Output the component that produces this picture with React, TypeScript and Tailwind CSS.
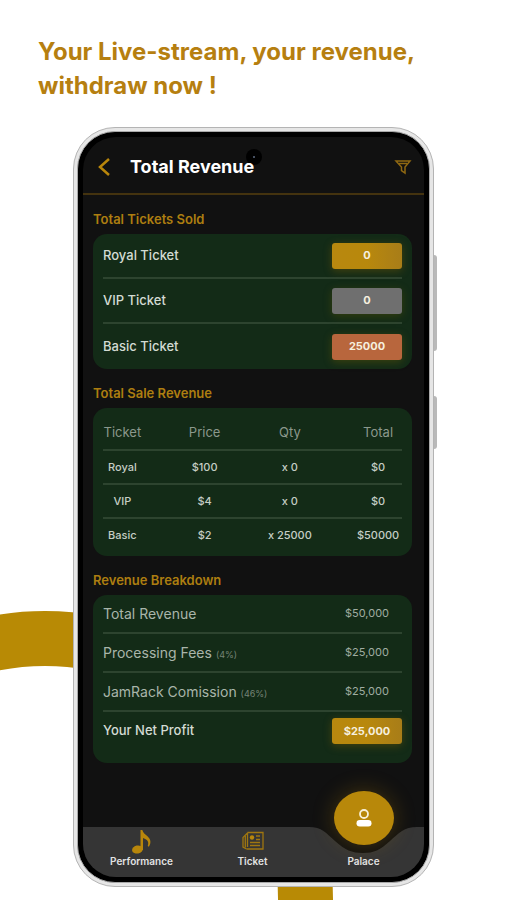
import type { ReactNode } from "react";

type BadgeTone = "gold" | "silver" | "bronze";

const tones: Record<BadgeTone, string> = {
  gold: "bg-linear-to-r from-[#b8880f] via-[#b8880c] to-[#a87d18] shadow-[0_2px_8px_rgba(140,100,0,0.4)]",
  silver: "bg-[#6f6f6f] shadow-[0_2px_8px_rgba(100,90,0,0.4)]",
  bronze: "bg-[#b8663d] shadow-[0_2px_8px_rgba(120,100,0,0.4)]",
};

const tickets: { name: string; sold: string; tone: BadgeTone }[] = [
  { name: "Royal Ticket", sold: "0", tone: "gold" },
  { name: "VIP Ticket", sold: "0", tone: "silver" },
  { name: "Basic Ticket", sold: "25000", tone: "bronze" },
];

const sales = [
  ["Royal", "$100", "x 0", "$0"],
  ["VIP", "$4", "x 0", "$0"],
  ["Basic", "$2", "x 25000", "$50000"],
];

const breakdown = [
  { label: "Total Revenue", note: "", amount: "$50,000" },
  { label: "Processing Fees", note: "(4%)", amount: "$25,000" },
  { label: "JamRack Comission", note: "(46%)", amount: "$25,000" },
];

function Badge({ tone, children }: { tone: BadgeTone; children: ReactNode }) {
  return (
    <span
      className={`flex h-[26px] w-[70px] items-center justify-center rounded-[3px] text-[11px] font-bold text-[#f6efdf] ${tones[tone]}`}
    >
      {children}
    </span>
  );
}

function Section({ title, children }: { title: string; children: ReactNode }) {
  return (
    <section className="pr-3 pl-[10px]">
      <h2 className="pt-[15px] pb-[6px] text-[13px] leading-[18px] font-semibold text-[#ad7e10]">{title}</h2>
      <div className="rounded-[14px] bg-[#132b17] px-[10px]">{children}</div>
    </section>
  );
}

function NoteIcon() {
  return (
    <svg width="22" height="26" viewBox="0 0 22 26" aria-hidden="true">
      <ellipse cx="6.5" cy="20.5" rx="5.5" ry="4" fill="#b8860b" transform="rotate(-12 6.5 20.5)" />
      <path
        d="M9.500 1h1.800c.8 3.200 3.200 4.400 5.400 6.400 3.200 3 3.600 6.300 1.200 10.300l-1.200-.6c1.400-3.600.3-6.600-4.700-8.100v12H9.500z"
        fill="#b8860b"
      />
    </svg>
  );
}

function NewsIcon() {
  return (
    <svg width="22" height="20" viewBox="0 0 22 20" fill="none" stroke="#9f7610" strokeWidth="1.300" aria-hidden="true">
      <path d="M5.500 1.500h15.500v16.500H4.500" />
      <path d="M5.500 1.500v14.500M5.500 2 1 6.500v9.500l3.500 2" />
      <path d="M3.300 5v11.500" />
      <circle cx="10" cy="6.500" r="2.200" fill="#b8860b" stroke="none" />
      <path d="M14 5h4M14 8.500h4M8 11.500h10M8 14.500h10" />
    </svg>
  );
}

export default function App() {
  return (
    <main className="relative min-h-screen overflow-hidden bg-white pb-[13px] font-['Inter','Liberation_Sans',sans-serif]">
      <div
        aria-hidden="true"
        className="absolute top-[611px] left-[-243px] size-[576px] rounded-full border-[55px] border-[#b88a05]"
      />

      <h1 className="px-[38px] pt-[35px] text-[24px] leading-[34px] font-bold text-[#b67f10]">
        Your Live-stream, your revenue,
        <br />
        withdraw now !
      </h1>

      <div className="relative mt-6 mr-[72px] ml-[73px] rounded-[42px] border border-[#b4b4b4] bg-[#e6e6e6] p-[3px]">
        <div aria-hidden="true" className="absolute top-[127px] right-[-4px] h-[96px] w-[3px] rounded-r-sm bg-[#b9b9b9]" />
        <div aria-hidden="true" className="absolute top-[268px] right-[-4px] h-[53px] w-[3px] rounded-r-sm bg-[#b9b9b9]" />

        <div className="rounded-[38px] border border-[#a9a9a9] bg-black p-[5px]">
          <div className="relative overflow-hidden rounded-[33px] bg-[#111111]">
            <div
              aria-hidden="true"
              className="absolute top-[12px] left-1/2 flex size-4 -translate-x-1/2 items-center justify-center rounded-full bg-black"
            >
              <span className="size-[2px] rounded-full bg-[#5c6a80]" />
            </div>

            <header className="relative flex h-[58px] items-center border-b-2 border-[#44330f] pt-1 pr-3 pl-[13px]">
              <button type="button" aria-label="Back" className="flex h-6 w-[34px] items-center">
                <svg width="15" height="20" viewBox="0 0 15 20" fill="none" stroke="#b8860b" strokeWidth="2.500" aria-hidden="true">
                  <path d="M13 2 4 10l9 8" />
                </svg>
              </button>
              <span className="text-[18px] leading-6 font-bold text-white">Total Revenue</span>
              <button type="button" aria-label="Filter" className="ml-auto">
                <svg width="18" height="16" viewBox="0 0 18 16" fill="none" stroke="#8f6812" strokeWidth="1.500" aria-hidden="true">
                  <path d="M2 2h14l-5 6v6l-3.500-2.500V8z" />
                  <path d="M5 4.500h8" />
                </svg>
              </button>
            </header>

            <Section title="Total Tickets Sold">
              <ul>
                {tickets.map((t) => (
                  <li
                    key={t.name}
                    className="flex h-[45px] items-center justify-between border-b-2 border-[#2d442f] text-[13px] font-medium text-[#d3dbd3] last:border-b-0"
                  >
                    {t.name}
                    <Badge tone={t.tone}>{t.sold}</Badge>
                  </li>
                ))}
              </ul>
            </Section>

            <Section title="Total Sale Revenue">
              <div className="pt-2 pb-1">
                <table className="w-full table-fixed text-center whitespace-nowrap">
                  <colgroup>
                    <col className="w-[27%]" />
                    <col className="w-[14%]" />
                    <col className="w-[43%]" />
                    <col className="w-[16%]" />
                  </colgroup>
                  <thead>
                    <tr className="h-[34px] border-b-2 border-[#2d442f] text-[13px] text-[#8b988c]">
                      <th className="pr-[42px] font-normal">Ticket</th>
                      <th className="font-normal">Price</th>
                      <th className="font-normal">Qty</th>
                      <th className="font-normal">Total</th>
                    </tr>
                  </thead>
                  <tbody>
                    {sales.map((row) => (
                      <tr
                        key={row[0]}
                        className="h-[34px] border-b-2 border-[#2d442f] text-[11px] font-medium text-[#c5cec5] last:border-b-0"
                      >
                        <td className="pr-[42px]">{row[0]}</td>
                        <td>{row[1]}</td>
                        <td>{row[2]}</td>
                        <td>{row[3]}</td>
                      </tr>
                    ))}
                  </tbody>
                </table>
              </div>
            </Section>

            <Section title="Revenue Breakdown">
              <dl className="pb-[13px]">
                {breakdown.map((b) => (
                  <div key={b.label} className="flex h-[39px] items-center justify-between border-b-2 border-[#2d442f]">
                    <dt className="text-[14px] text-[#a9b5aa]">
                      {b.label} {b.note && <span className="text-[9px] text-[#758476]">{b.note}</span>}
                    </dt>
                    <dd className="w-[70px] text-center text-[11px] text-[#a0ada1]">{b.amount}</dd>
                  </div>
                ))}
                <div className="flex h-[38px] items-center justify-between">
                  <dt className="text-[13px] font-medium text-[#d3dbd3]">Your Net Profit</dt>
                  <dd>
                    <Badge tone="gold">$25,000</Badge>
                  </dd>
                </div>
              </dl>
            </Section>

            <nav className="relative mt-16">
              <svg
                className="absolute inset-0 size-full"
                viewBox="0 0 341 50"
                preserveAspectRatio="none"
                aria-hidden="true"
              >
                <path
                  d="M0 0H226C239 0 243 6 252 14C262 23 269 26 280 26C291 26 297 23 307 14C316 6 321 0 334 0H341V50H0Z"
                  fill="#353535"
                />
              </svg>
              <div className="relative grid h-[50px] grid-cols-3 pr-[5px] pl-[3px] text-center text-[10px] leading-3 font-semibold text-[#e2e2e2]">
                <a href="#performance" className="flex flex-col items-center justify-end pb-[10px]">
                  <NoteIcon />
                  Performance
                </a>
                <a href="#ticket" className="flex flex-col items-center justify-end gap-1 pb-[10px]">
                  <NewsIcon />
                  Ticket
                </a>
                <a href="#palace" className="relative flex flex-col items-center justify-end pb-[10px]">
                  <span className="absolute -top-9 flex h-[54px] w-[60px] items-center justify-center rounded-[50%] bg-[#b8880a] shadow-[0_0_22px_rgba(184,134,11,0.3)]">
                    <svg width="16" height="20" viewBox="0 0 16 20" aria-hidden="true">
                      <circle cx="8" cy="6" r="4" fill="none" stroke="#f8f0d8" strokeWidth="1.800" />
                      <rect x="0.500" y="12" width="15" height="6.500" rx="3.250" fill="#ffffff" />
                    </svg>
                  </span>
                  Palace
                </a>
              </div>
            </nav>
          </div>
        </div>
      </div>
    </main>
  );
}
